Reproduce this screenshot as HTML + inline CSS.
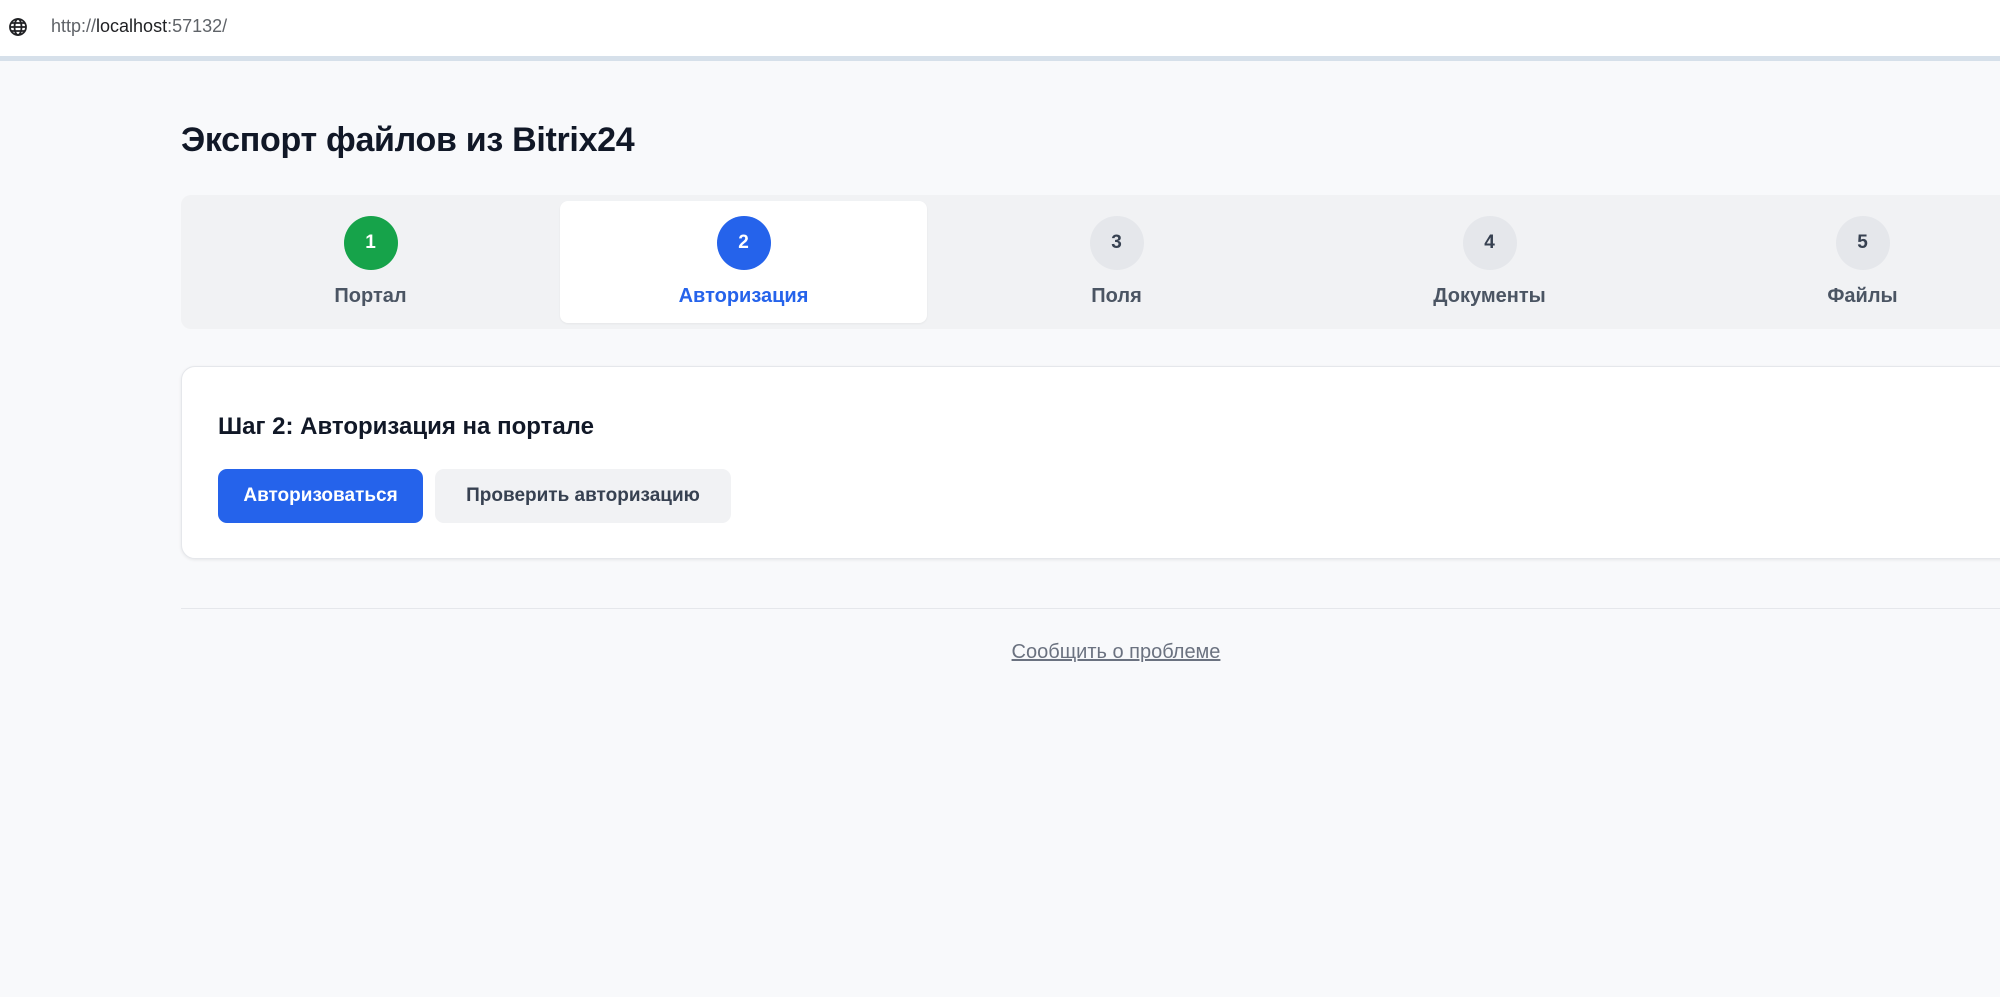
<!DOCTYPE html>
<html><head><meta charset="utf-8"><style>
*{box-sizing:border-box;margin:0;padding:0}
html,body{width:2000px;height:997px;overflow:hidden;background:#f8f9fb;font-family:"Liberation Sans","DejaVu Sans",sans-serif;color:#111827}
.bar{position:absolute;left:0;top:0;width:2000px;height:56px;background:#fff}
.bar .url{position:absolute;left:51px;top:16px;font-size:18px;color:#5f6368}
.bar .url b{font-weight:normal;color:#202124}
.line{position:absolute;left:0;top:56px;width:2000px;height:5px;background:#d6e0ea}
h1{position:absolute;left:181px;top:121px;font-size:34px;font-weight:bold;color:#111827;letter-spacing:-0.3px}
.steps{position:absolute;left:181px;top:195px;width:1880px;height:134px;background:#f1f2f4;border-radius:10px;padding:6px 3px;display:flex}
.step{width:373px;height:122px;border-radius:8px;position:relative;text-align:center}
.step.act{background:#fff;width:367px;margin:0 3px;box-shadow:0 1px 2px rgba(0,0,0,.05)}
.circ{position:absolute;left:50%;top:15px;width:54px;height:54px;margin-left:-27px;border-radius:50%;background:#e5e7eb;color:#374151;font-size:19px;line-height:54px;font-weight:bold}
.lbl{position:absolute;left:0;right:0;top:84px;font-size:20px;font-weight:bold;color:#4b5563}
.card{position:absolute;left:181px;top:366px;width:1840px;height:193px;background:#fff;border:1px solid #e5e7eb;border-radius:14px;box-shadow:0 1px 3px rgba(0,0,0,.08)}
.card h2{position:absolute;left:36px;top:46px;font-size:24px;font-weight:bold;color:#111827}
.btn{position:absolute;top:102px;height:54px;border-radius:9px;font-size:19px;font-weight:bold;line-height:54px;text-align:center}
.b1{left:36px;width:205px;background:#2563eb;color:#fff}
.b2{left:253px;width:296px;background:#f1f2f4;color:#374151}
.hr{position:absolute;left:181px;top:608px;width:1819px;height:1px;background:#e5e7eb}
.link{position:absolute;left:0;width:2232px;top:641px;text-align:center;font-size:20px;color:#6b7280;text-decoration:underline}
</style></head><body>
<div class="bar">
<svg style="position:absolute;left:8px;top:17px" width="20" height="20" viewBox="0 0 20 20" fill="none" stroke="#202124" stroke-width="1.8"><circle cx="10" cy="10" r="8"/><ellipse cx="10" cy="10" rx="3.5" ry="8"/><path d="M2 10h16M3.5 6h13M3.5 14h13"/></svg>
<div class="url">http://<b>localhost</b>:57132/</div>
</div>
<div class="line"></div>
<h1>Экспорт файлов из Bitrix24</h1>
<div class="steps">
<div class="step"><div class="circ" style="background:#16a34a;color:#fff">1</div><div class="lbl">Портал</div></div>
<div class="step act"><div class="circ" style="background:#2563eb;color:#fff">2</div><div class="lbl" style="color:#2563eb">Авторизация</div></div>
<div class="step"><div class="circ">3</div><div class="lbl">Поля</div></div>
<div class="step"><div class="circ">4</div><div class="lbl">Документы</div></div>
<div class="step"><div class="circ">5</div><div class="lbl">Файлы</div></div>
</div>
<div class="card">
<h2>Шаг 2: Авторизация на портале</h2>
<div class="btn b1">Авторизоваться</div>
<div class="btn b2">Проверить авторизацию</div>
</div>
<div class="hr"></div>
<div class="link">Сообщить о проблеме</div>
</body></html>
